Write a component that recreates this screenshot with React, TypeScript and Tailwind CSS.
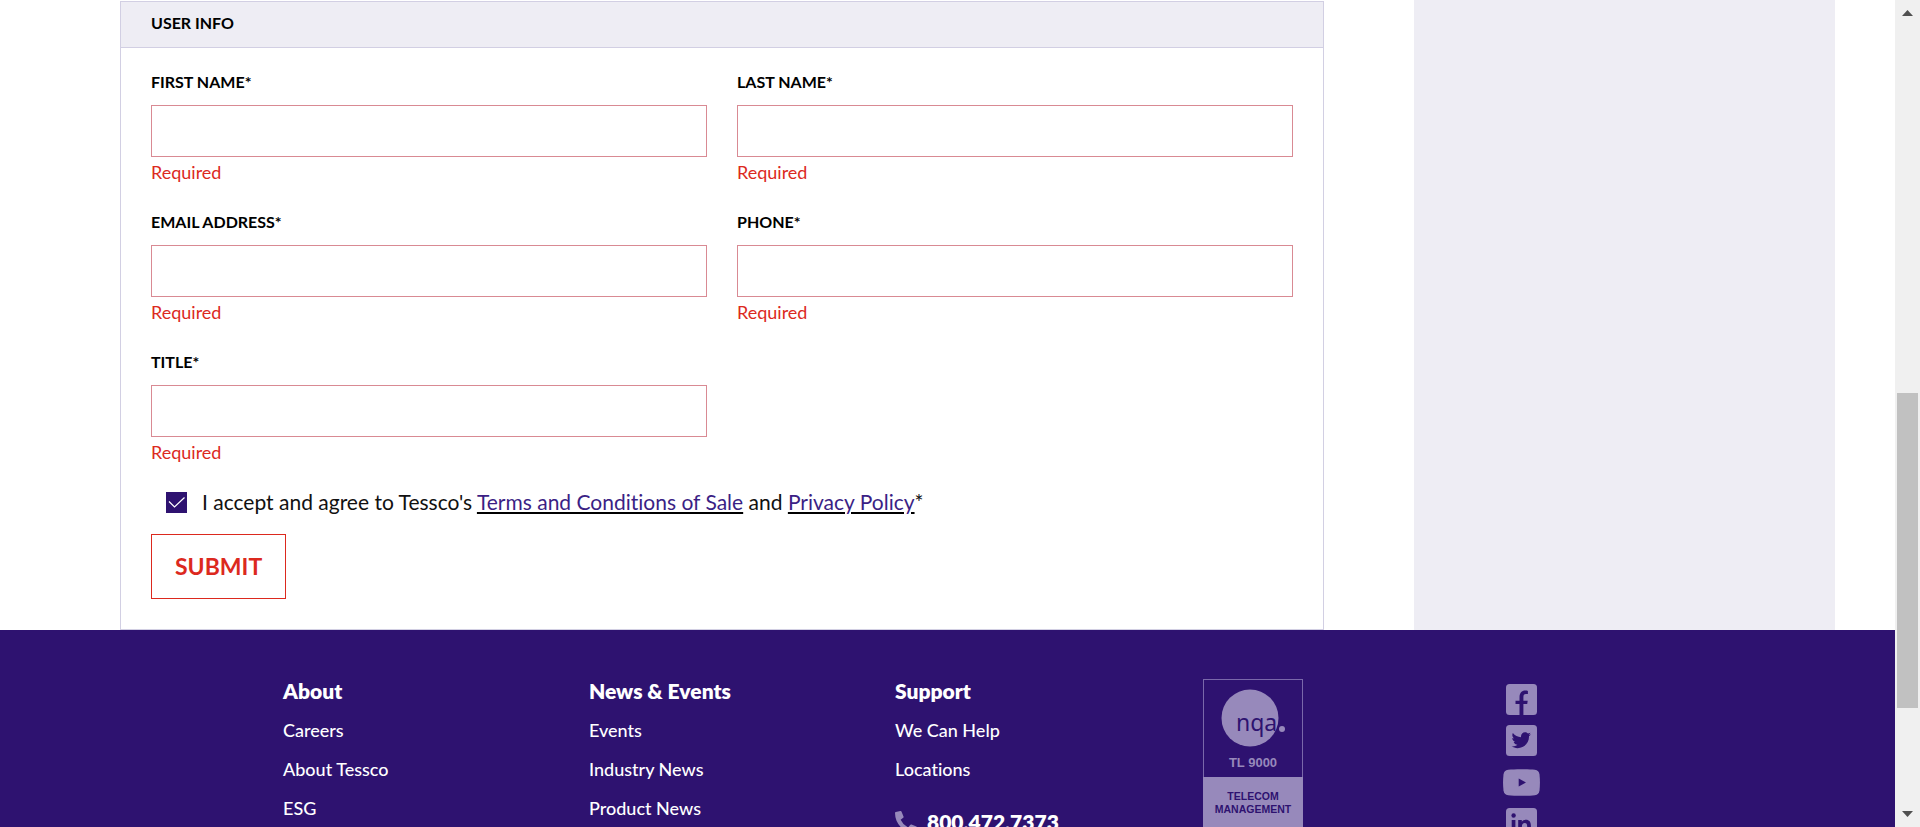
import type { ReactNode } from "react";
import { FaPhoneAlt, FaTwitter } from "react-icons/fa";

type FieldProps = { id: string; label: string; type?: string };

function Field({ id, label, type = "text" }: FieldProps) {
  return (
    <div className="flex flex-col">
      <label htmlFor={id} className="text-base leading-6 font-bold text-black uppercase">
        {label}*
      </label>
      <input
        id={id}
        type={type}
        aria-describedby={`${id}-error`}
        className="mt-[11px] h-[52px] w-full border border-[#d98a93] bg-white px-3 text-lg outline-none"
      />
      <p id={`${id}-error`} className="mt-[3px] text-lg leading-6 text-[#dc291e]">
        Required
      </p>
    </div>
  );
}

function UserInfoForm() {
  return (
    <section className="mt-px ml-[120px] min-w-0 flex-1 border border-[#d2cfe3]">
      <h2 className="border-b border-[#d2cfe3] bg-[#eeedf4] px-[30px] pt-[9px] pb-3 text-base leading-6 font-bold text-black">
        USER INFO
      </h2>
      <form className="px-[30px] pt-[22px] pb-[30px]" onSubmit={(e) => e.preventDefault()}>
        <div className="grid grid-cols-2 gap-x-[30px] gap-y-[26px]">
          <Field id="first-name" label="First Name" />
          <Field id="last-name" label="Last Name" />
          <Field id="email" label="Email Address" type="email" />
          <Field id="phone" label="Phone" type="tel" />
          <Field id="title" label="Title" />
        </div>
        <div className="mt-[23px] ml-[15px] flex items-center text-[21px] leading-[30px] text-[#111]">
          <span className="grid size-[21px] shrink-0">
            <input
              id="accept"
              type="checkbox"
              defaultChecked
              className="col-start-1 row-start-1 size-full appearance-none border border-[#2e1270] checked:bg-[#2e1270]"
            />
            <svg
              viewBox="0 0 21 21"
              className="pointer-events-none col-start-1 row-start-1 size-full"
              fill="none"
              stroke="#fff"
              strokeWidth="1.2"
            >
              <path d="M3 9.5 8.5 15 18.5 5.5" />
            </svg>
          </span>
          <label htmlFor="accept" className="ml-[15px]">
            I accept and agree to Tessco's{" "}
            <a href="#terms" className="text-[#3b1f85] underline decoration-black decoration-2 underline-offset-2">
              Terms and Conditions of Sale
            </a>{" "}
            and{" "}
            <a href="#privacy" className="text-[#3b1f85] underline decoration-black decoration-2 underline-offset-2">
              Privacy Policy
            </a>
            *
          </label>
        </div>
        <button
          type="submit"
          className="mt-[17px] h-[65px] border border-[#dc291e] bg-white px-[23px] text-[23px] font-bold text-[#dc291e]"
        >
          SUBMIT
        </button>
      </form>
    </section>
  );
}

function LinkColumn({ title, links }: { title: string; links: string[] }) {
  return (
    <div>
      <h3 className="text-[21px] leading-6 font-extrabold">{title}</h3>
      <ul className="mt-[15px]">
        {links.map((link) => (
          <li key={link} className="mb-[15px] text-lg leading-6 font-medium">
            <a href="#link">{link}</a>
          </li>
        ))}
      </ul>
    </div>
  );
}

function NqaBadge() {
  return (
    <svg viewBox="0 0 100 148" className="w-[100px]" role="img" aria-label="NQA TL 9000">
      <rect x="0.5" y="0.5" width="99" height="147" fill="none" stroke="#7a68aa" />
      <circle cx="47" cy="39" r="28.5" fill="#9789bb" />
      <circle cx="79" cy="50" r="3" fill="#9789bb" />
      <text x="33" y="52" fontFamily="Noto Sans, sans-serif" fontSize="23" fill="#2e1270">
        nqa
      </text>
      <g fontFamily="Liberation Sans, sans-serif" fontWeight="700" textAnchor="middle">
        <text x="50" y="88" fontSize="13" fill="#9789bb">
          TL 9000
        </text>
        <rect y="98" width="100" height="50" fill="#9789bb" />
        <text x="50" y="121" fontSize="10.5" fill="#2e1270">
          TELECOM
        </text>
        <text x="50" y="134" fontSize="10.5" fill="#2e1270">
          MANAGEMENT
        </text>
      </g>
    </svg>
  );
}

function SquareIcon({ children }: { children: ReactNode }) {
  return (
    <svg viewBox="0 0 31 31" className="size-[31px]">
      <rect width="31" height="31" rx="3.5" fill="#9789bb" />
      {children}
    </svg>
  );
}

function SocialLinks() {
  return (
    <nav aria-label="Social media" className="flex w-[29px] flex-col items-center pt-[5px]">
      <a href="#facebook" aria-label="Facebook">
        <SquareIcon>
          <path
            d="M13.5 31V20H9.5V16.7h4V13.5C13.5 9 15.8 6.6 19.3 6.6c1.1 0 2 .1 2.6.3v3.2h-2c-1.9 0-2.5 1-2.5 2.9v3.7h4.3l-.5 3.3h-3.8V31Z"
            fill="#2e1270"
          />
        </SquareIcon>
      </a>
      <a href="#twitter" aria-label="Twitter" className="mt-[10px]">
        <SquareIcon>
          <FaTwitter x="5.5" y="5.5" width="19.5" height="19.5" size="19.5" color="#2e1270" />
        </SquareIcon>
      </a>
      <a href="#youtube" aria-label="YouTube" className="mt-[13px]">
        <svg viewBox="0 0 37 27" className="h-[27px] w-[37px]">
          <path
            d="M18.5 0.2c6 0 10 .2 13.4.6 2.8.4 4.2 1.9 4.6 4.7.6 5.3.6 10.7 0 16-.4 2.8-1.8 4.3-4.6 4.7-6.8.8-20 .8-26.8 0-2.8-.4-4.2-1.9-4.600-4.700-.6-5.300-.6-10.700 0-16C.9 2.700 2.300 1.200 5.100.8 8.500.4 12.500.2 18.500.2Z"
            fill="#9789bb"
          />
          <path d="M15.700 9.500 23 13.500 15.700 17.500Z" fill="#2e1270" />
        </svg>
      </a>
      <a href="#linkedin" aria-label="LinkedIn" className="mt-[12px]">
        <SquareIcon>
          <g fill="#2e1270">
            <circle cx="7.600" cy="7.500" r="2.200" />
            <path d="M5.700 12h3.700v13.500H5.700ZM12.200 12h3.600v1.800c.8-1.300 2.200-2.100 4.100-2.100 3.400 0 5 2.300 5 6v7.800h-3.700v-7.200c0-2.200-.8-3.400-2.400-3.400-1.900 0-2.900 1.300-2.900 3.500v7.100h-3.700Z" />
          </g>
        </SquareIcon>
      </a>
    </nav>
  );
}

function Footer() {
  return (
    <footer className="min-h-0 flex-1 overflow-hidden bg-[#2e1270] pt-[49px] pr-[82px] pl-[283px] text-white">
      <div className="grid grid-cols-5">
        <LinkColumn title="About" links={["Careers", "About Tessco", "ESG"]} />
        <LinkColumn title="News & Events" links={["Events", "Industry News", "Product News"]} />
        <div>
          <LinkColumn title="Support" links={["We Can Help", "Locations"]} />
          <a href="tel:8004727373" className="mt-[27px] flex items-center gap-[10px] text-[21px] leading-7 font-extrabold">
            <FaPhoneAlt className="size-[22px] text-[#9789bb]" />
            800.472.7373
          </a>
        </div>
        <div className="pl-[2px]">
          <NqaBadge />
        </div>
        <SocialLinks />
      </div>
    </footer>
  );
}

function ScrollRail() {
  return (
    <div aria-hidden="true" className="flex w-[25px] shrink-0 flex-col items-center bg-[#f0f0f0]">
      <svg viewBox="0 0 25 25" className="size-[25px]" fill="#505050">
        <path d="M7 16 12.5 10 18 16Z" />
      </svg>
      <div className="grow-[368]" />
      <div className="w-[21px] grow-[315] bg-[#c1c1c1]" />
      <div className="grow-[94]" />
      <svg viewBox="0 0 25 25" className="size-[25px]" fill="#505050">
        <path d="M7 9 12.5 15 18 9Z" />
      </svg>
    </div>
  );
}

export default function App() {
  return (
    <div className="flex h-screen overflow-hidden bg-white font-[Lato,'Open_Sans',sans-serif] [font-variant-ligatures:none]">
      <div className="flex min-w-0 flex-1 flex-col">
        <main className="flex shrink-0">
          <UserInfoForm />
          <aside className="mr-[60px] ml-[90px] w-[421px] shrink-0 bg-[#eeedf4]" />
        </main>
        <Footer />
      </div>
      <ScrollRail />
    </div>
  );
}
